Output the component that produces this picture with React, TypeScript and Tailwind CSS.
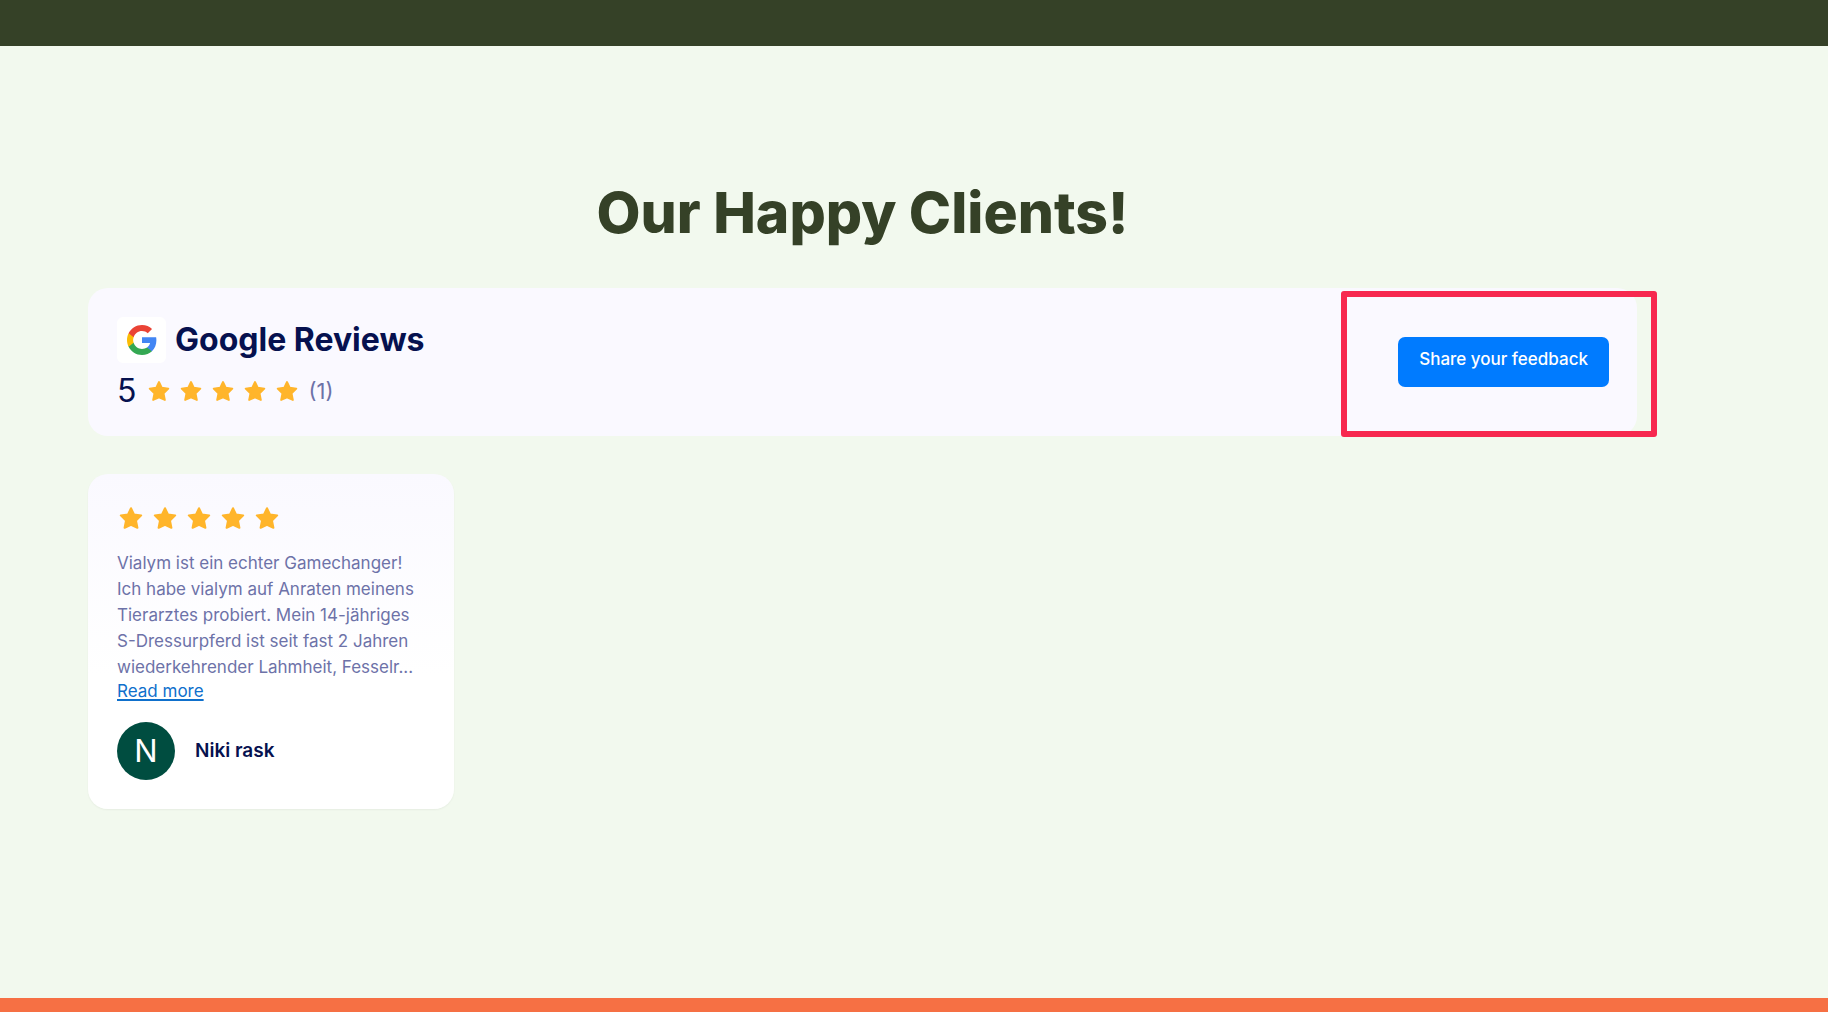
function Star({ className }: { className: string }) {
  return (
    <svg viewBox="0 0 24 24" className={className} fill="#ffb52b" stroke="#ffb52b" strokeWidth="2" strokeLinejoin="round" aria-hidden="true">
      <path d="M12 2.2 L15 8.4 L22.2 9.4 L17 14.6 L18.4 21.8 L12 18.9 L5.6 21.8 L7 14.6 L1.8 9.4 L9 8.4 Z" />
    </svg>
  );
}

function Stars({ className, size }: { className: string; size: string }) {
  return (
    <div role="img" aria-label="5 out of 5 stars" className={className}>
      {[1, 2, 3, 4, 5].map((n) => (
        <Star key={n} className={size} />
      ))}
    </div>
  );
}

function GoogleLogo() {
  return (
    <svg viewBox="1 1 22 22" className="size-[30px]" aria-hidden="true">
      <path fill="#4285F4" d="M22.56 12.25c0-.78-.07-1.53-.2-2.25H12v4.26h5.92c-.26 1.37-1.04 2.53-2.21 3.31v2.77h3.57c2.08-1.92 3.28-4.74 3.28-8.09z" />
      <path fill="#34A853" d="M12 23c2.97 0 5.46-.98 7.28-2.66l-3.57-2.77c-.98.66-2.23 1.06-3.71 1.06-2.86 0-5.29-1.93-6.16-4.53H2.18v2.84C3.99 20.53 7.7 23 12 23z" />
      <path fill="#FBBC05" d="M5.84 14.09c-.22-.66-.35-1.36-.35-2.09s.13-1.43.35-2.09V7.07H2.18C1.43 8.55 1 10.22 1 12s.43 3.45 1.18 4.93l3.66-2.84z" />
      <path fill="#EA4335" d="M12 5.38c1.62 0 3.06.56 4.21 1.64l3.15-3.15C17.45 2.09 14.97 1 12 1 7.7 1 3.99 3.47 2.18 7.07l3.66 2.84c.87-2.6 3.3-4.53 6.16-4.53z" />
    </svg>
  );
}

export default function App() {
  return (
    <div className="flex min-h-screen flex-col bg-[#f2f9ee] font-['Inter',sans-serif]">
      <header className="h-[46px] bg-[#354127]" />
      <main className="flex-1 pl-[88px] pr-[191px] pt-[132px] pb-[180px]">
        <h2 className="text-center text-[57px] leading-[70px] font-extrabold text-[#354127]">Our Happy Clients!</h2>

        <section className="relative mt-10 flex items-center justify-between rounded-[20px] bg-[#faf9ff] pt-[29px] pr-7 pb-[25px] pl-[29px]">
          <div>
            <div className="flex items-center gap-[9px]">
              <div className="flex h-[46px] w-[49px] items-center justify-center rounded-md bg-white">
                <GoogleLogo />
              </div>
              <h3 className="text-[32px] leading-[46px] font-bold text-[#06114f]">Google Reviews</h3>
            </div>
            <div className="mt-2 flex items-center">
              <span className="text-[32px] leading-10 text-[#06114f]">5</span>
              <Stars className="ml-3 flex gap-2.5" size="size-[22px]" />
              <span className="ml-2.5 text-[22px] leading-10 text-[#6d72a8]">(1)</span>
            </div>
          </div>
          <button type="button" className="mb-1 h-[50px] rounded-[7px] bg-[#007bff] px-[21px] pb-1 text-[17px] font-medium text-white">
            Share your feedback
          </button>
          <div className="pointer-events-none absolute top-[3px] -right-5 h-[146px] w-[316px] rounded-[3px] border-6 border-[#f7284f]" />
        </section>

        <article className="mt-[38px] w-[366px] rounded-[20px] bg-linear-to-b from-[#faf9ff] to-white to-60% px-[29px] pt-8 pb-[29px] shadow-xs shadow-black/5">
          <Stars className="flex gap-2.5 pl-0.5" size="size-6" />
          <p className="mt-5 text-[17px] leading-[26px] text-[#6d72a8]">
            Vialym ist ein echter Gamechanger!
            <br />
            Ich habe vialym auf Anraten meinens
            <br />
            Tierarztes probiert. Mein 14-jähriges
            <br />
            S-Dressurpferd ist seit fast 2 Jahren
            <br />
            wiederkehrender Lahmheit, Fesselr...
          </p>
          <a href="#review" className="block w-fit text-[17px] leading-[22px] text-[#0f70cc] underline decoration-2 underline-offset-2">
            Read more
          </a>
          <div className="mt-5 flex items-center gap-5">
            <div className="flex size-[58px] items-center justify-center rounded-full bg-[#004d40] text-[31px] text-white">N</div>
            <span className="text-[19px] font-semibold text-[#06114f]">Niki rask</span>
          </div>
        </article>
      </main>
      <footer className="h-3.5 bg-[#f67044]" />
    </div>
  );
}
